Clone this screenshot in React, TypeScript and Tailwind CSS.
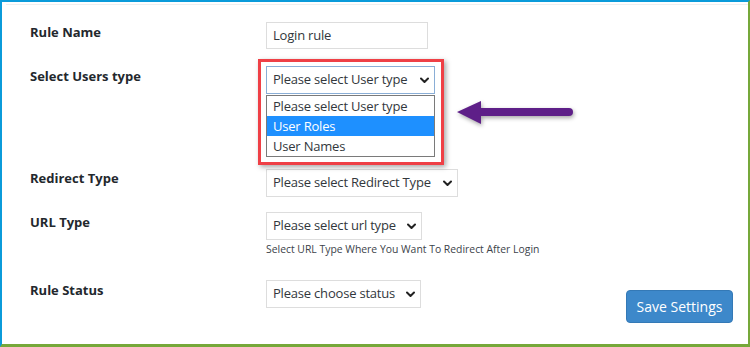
import React from 'react';

const Chevron = () => (
  <svg className="w-[9px] h-[7px] shrink-0" viewBox="0 0 9 7" fill="none">
    <polyline points="1,1.5 4.5,5 8,1.5" stroke="#222" strokeWidth={2} strokeLinecap="round" strokeLinejoin="round" />
  </svg>
);

const FakeSelect: React.FC<{ text: string; width: string; focused?: boolean }> = ({ text, width, focused }) => (
  <div
    className={`${width} h-[28px] flex items-center justify-between pl-[6px] pr-[5px] bg-white border ${
      focused ? 'border-[#8aaed6]' : 'border-[#dddddd]'
    } text-[13px] tracking-[-0.2px] text-[#32373c]`}
  >
    <span className="whitespace-nowrap">{text}</span>
    <Chevron />
  </div>
);

const Label: React.FC<{ children: React.ReactNode; offset?: string }> = ({ children, offset = 'pt-px' }) => (
  <div className={`w-[236px] shrink-0 ${offset} text-[13px] leading-[18px] font-bold text-[#23282d]`}>{children}</div>
);

export default function App() {
  return (
    <div
      className="relative w-[750px] h-[347px] bg-white border-t-2 border-l-2 border-r-2 border-b-[3px] border-t-[#0b9bda] border-l-[#0b9bda] border-r-[#76a83a] border-b-[#76a83a] overflow-hidden"
      style={{ fontFamily: '"Open Sans", "Noto Sans", sans-serif' }}
    >
      <div className="ml-[4px] mt-[2px] h-px bg-[#efefef]" />
      <div className="pl-[28px] pr-[15px] flex flex-col">
        {/* Rule name */}
        <div className="flex mt-[17px]">
          <Label>Rule Name</Label>
          <div className="w-[162px] h-[27px] flex items-center pl-[6px] border border-[#dddddd] text-[13px] tracking-[-0.2px] text-[#32373c]">
            Login rule
          </div>
        </div>

        {/* Users type with open list */}
        <div className="flex mt-[17px]">
          <Label>Select Users type</Label>
          <div className="relative flex flex-col">
            <FakeSelect text="Please select User type" width="w-[169px]" focused />
            <div className="mt-px w-[169px] border border-[#7a7a7a] bg-white text-[13px] tracking-[-0.2px] text-[#32373c] leading-[20px]">
              <div className="pl-[6px] h-[20px]">Please select User type</div>
              <div className="pl-[6px] h-[20px] bg-[#1e90ff] text-white">User Roles</div>
              <div className="pl-[6px] h-[20px]">User Names</div>
            </div>
            <div className="absolute left-[-8px] top-[-7px] w-[186px] h-[106px] border-[3px] border-[#ef4046] shadow-[2px_2px_5px_rgba(0,0,0,0.35)] pointer-events-none" />
          </div>
        </div>

        {/* Redirect type */}
        <div className="flex mt-[12px]">
          <Label offset="pt-0">Redirect Type</Label>
          <FakeSelect text="Please select Redirect Type" width="w-[192px]" />
        </div>

        {/* URL type */}
        <div className="flex mt-[15px]">
          <Label>URL Type</Label>
          <div className="flex flex-col">
            <FakeSelect text="Please select url type" width="w-[156px]" />
            <div className="mt-[3px] text-[10.4px] leading-[13px] text-[#3c434a] whitespace-nowrap">
              Select URL Type Where You Want To Redirect After Login
            </div>
          </div>
        </div>

        {/* Rule status */}
        <div className="flex mt-[24px]">
          <Label>Rule Status</Label>
          <FakeSelect text="Please choose status" width="w-[155px]" />
          <button className="ml-auto mt-[10px] w-[107px] h-[33px] rounded-[4px] bg-[#3d88ca] border border-[#3479b6] text-white text-[14px]">
            Save Settings
          </button>
        </div>
      </div>

      {/* annotation arrow */}
      <svg
        className="absolute left-[450px] top-[96px] w-[126px] h-[34px]"
        viewBox="0 0 126 34"
        style={{ filter: 'drop-shadow(1px 2px 2px rgba(0,0,0,0.35))' }}
      >
        <line x1="26" y1="14" x2="117" y2="14" stroke="#5e1f88" strokeWidth={8} strokeLinecap="round" />
        <polygon points="5,14 29,3 29,26" fill="#5e1f88" />
      </svg>
    </div>
  );
}
